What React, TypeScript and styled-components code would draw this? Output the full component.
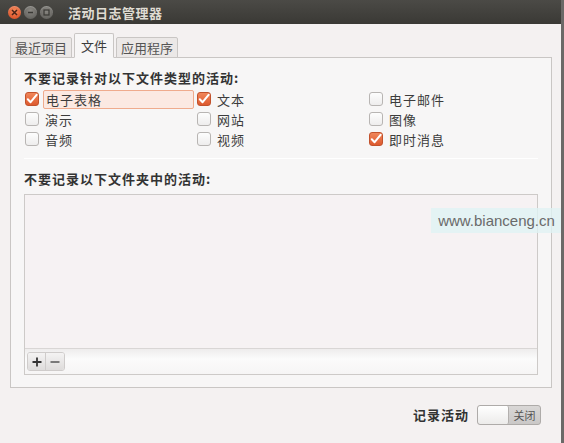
import React from 'react'
import styled, { createGlobalStyle } from 'styled-components'

const GlobalStyle = createGlobalStyle`
    html, body {
        margin: 0;
        padding: 0;
        background: #f4f1f1;
    }
    * {
        box-sizing: border-box;
    }
`

const Window = styled.div`
    position: relative;
    width: 564px;
    height: 443px;
    display: flex;
    flex-direction: column;
    background: #f4f1f1;
    border-right: 3px solid #6b6967;
    font-family: 'Noto Sans CJK SC', 'Noto Sans', sans-serif;
    font-size: 13px;
    color: #3c3c3c;
    overflow: hidden;
`

const TitleBar = styled.div`
    height: 24px;
    flex: none;
    display: flex;
    align-items: center;
    padding-left: 8px;
    background: linear-gradient(#4b4a46, #3a3935);
`

const WinButton = styled.span<{ color: string }>`
    width: 13px;
    height: 13px;
    border-radius: 50%;
    margin-right: 3px;
    display: flex;
    align-items: center;
    justify-content: center;
    background: ${props => props.color};
    box-shadow: inset 0 1px 1px rgba(255, 255, 255, 0.25);
`

const Title = styled.span`
    margin-left: 12px;
    color: #dfdbd2;
    font-weight: bold;
    font-size: 13px;
    letter-spacing: 0.5px;
`

const Body = styled.div`
    flex: 1;
    display: flex;
    flex-direction: column;
    padding: 9px 9px 0 10px;
`

const TabRow = styled.div`
    display: flex;
    align-items: flex-end;
    height: 25px;
    margin-bottom: -1px;
    position: relative;
    z-index: 1;
`

const Tab = styled.div<{ active?: boolean }>`
    height: ${props => (props.active ? '25px' : '21px')};
    padding: 0 ${props => (props.active ? '6px' : '4px')};
    margin-right: 2px;
    display: flex;
    align-items: center;
    border: 1px solid #c9c6c4;
    border-bottom-color: ${props => (props.active ? '#f7f6f6' : '#c9c6c4')};
    border-radius: 2px 2px 0 0;
    background: ${props => (props.active ? '#f7f6f6' : '#ebe8e7')};
    color: ${props => (props.active ? '#3c3c3c' : '#555')};
`

const Notebook = styled.div`
    height: 331px;
    border: 1px solid #c9c6c4;
    background: #f7f6f6;
    padding: 12px 13px 12px 13px;
    display: flex;
    flex-direction: column;
`

const Heading = styled.div`
    font-weight: bold;
    line-height: 16px;
    letter-spacing: 1px;
    color: #333;
`

const TypeGrid = styled.div`
    display: grid;
    grid-template-columns: 172px 172px 1fr;
    grid-auto-rows: 20px;
    margin-top: 3px;
`

const Option = styled.label`
    display: flex;
    align-items: center;
    gap: 4px;
    padding-left: 1px;
`

const Box = styled.span<{ checked?: boolean }>`
    width: 14px;
    height: 14px;
    flex: none;
    border-radius: 3px;
    display: flex;
    align-items: center;
    justify-content: center;
    border: 1px solid ${props => (props.checked ? '#c2522c' : '#b8b5b3')};
    background: ${props =>
        props.checked ? 'linear-gradient(#f0865a, #dd5a2f)' : 'linear-gradient(#fdfdfd, #eeeded)'};
`

const Label = styled.span<{ focused?: boolean }>`
    flex: ${props => (props.focused ? '0 0 151px' : 'none')};
    height: 19px;
    display: flex;
    align-items: center;
    padding-left: ${props => (props.focused ? '2px' : '1px')};
    border: 1px solid ${props => (props.focused ? '#efab8d' : 'transparent')};
    border-radius: 2px;
    background: ${props => (props.focused ? '#fbe9e2' : 'transparent')};
    letter-spacing: 1px;
`

const Separator = styled.div`
    height: 1px;
    background: #dcdad8;
    border-bottom: 1px solid #ffffff;
    margin: 9px 0 12px;
`

const ListFrame = styled.div`
    flex: 1;
    margin-top: 7px;
    display: flex;
    flex-direction: column;
    border: 1px solid #cdcac8;
`

const ListArea = styled.div`
    flex: 1;
    background: #f6f2f3;
    border-bottom: 1px solid #d9d6d5;
`

const Toolbar = styled.div`
    height: 25px;
    display: flex;
    align-items: center;
    padding-left: 2px;
    background: linear-gradient(#eeecec, #fbfbfb 40%, #f6f5f5);
`

const ToolGroup = styled.div`
    display: flex;
    border: 1px solid #cfcccb;
    border-radius: 3px;
    overflow: hidden;
`

const ToolButton = styled.button`
    width: 18px;
    height: 17px;
    padding: 0;
    border: none;
    border-right: 1px solid #cfcccb;
    background: linear-gradient(#f4f3f3, #dedcdb);
    display: flex;
    align-items: center;
    justify-content: center;
    &:last-child {
        border-right: none;
    }
`

const Footer = styled.div`
    flex: 1;
    display: flex;
    align-items: center;
    justify-content: flex-end;
    padding-right: 11px;
    padding-bottom: 2px;
    gap: 8px;
`

const FooterLabel = styled.span`
    font-weight: bold;
    letter-spacing: 1px;
    color: #333;
`

const Switch = styled.div`
    width: 64px;
    height: 20px;
    display: flex;
    border: 1px solid #aeaba9;
    border-radius: 3px;
    overflow: hidden;
    background: linear-gradient(#d9d7d6, #cac8c7);
`

const Knob = styled.div`
    width: 31px;
    background: linear-gradient(#ffffff, #ecebea);
    border-right: 1px solid #b3b0ae;
    border-radius: 2px;
`

const SwitchText = styled.span`
    flex: 1;
    display: flex;
    align-items: center;
    justify-content: center;
    font-size: 11px;
    color: #555;
`

const Watermark = styled.div`
    position: absolute;
    left: 431px;
    top: 208px;
    width: 131px;
    height: 25px;
    display: flex;
    align-items: center;
    justify-content: center;
    background: rgba(224, 242, 244, 0.8);
    font-family: 'Liberation Sans', Arial, sans-serif;
    font-size: 15px;
    color: #6a6a6a;
`

const Check = () => (
    <svg width="12" height="12" viewBox="0 0 12 12">
        <path d="M1.8 6.2 L4.6 9.2 L10.6 1.8" fill="none" stroke="#fff" strokeWidth="2" strokeLinecap="round" strokeLinejoin="round" />
    </svg>
)

const fileTypes = [
    { label: '电子表格', checked: true, focused: true },
    { label: '文本', checked: true },
    { label: '电子邮件' },
    { label: '演示' },
    { label: '网站' },
    { label: '图像' },
    { label: '音频' },
    { label: '视频' },
    { label: '即时消息', checked: true },
]

const App = () => {
    return (
        <Window>
            <GlobalStyle />
            <TitleBar>
                <WinButton color="radial-gradient(circle at 50% 35%, #f48a5c, #d6441b)">
                    <svg width="7" height="7" viewBox="0 0 7 7">
                        <path d="M1 1 L6 6 M6 1 L1 6" stroke="#4a2418" strokeWidth="1.5" />
                    </svg>
                </WinButton>
                <WinButton color="radial-gradient(circle at 50% 35%, #8a8883, #5a5955)">
                    <svg width="7" height="7" viewBox="0 0 7 7">
                        <path d="M1 3.5 L6 3.5" stroke="#3a3935" strokeWidth="1.5" />
                    </svg>
                </WinButton>
                <WinButton color="radial-gradient(circle at 50% 35%, #8a8883, #5a5955)">
                    <svg width="7" height="7" viewBox="0 0 7 7">
                        <rect x="1" y="1" width="5" height="5" fill="none" stroke="#3a3935" strokeWidth="1.2" />
                    </svg>
                </WinButton>
                <Title>活动日志管理器</Title>
            </TitleBar>
            <Body>
                <TabRow>
                    <Tab>最近项目</Tab>
                    <Tab active>文件</Tab>
                    <Tab>应用程序</Tab>
                </TabRow>
                <Notebook>
                    <Heading>不要记录针对以下文件类型的活动:</Heading>
                    <TypeGrid>
                        {fileTypes.map(t => (
                            <Option key={t.label}>
                                <Box checked={t.checked}>{t.checked && <Check />}</Box>
                                <Label focused={t.focused}>{t.label}</Label>
                            </Option>
                        ))}
                    </TypeGrid>
                    <Separator />
                    <Heading>不要记录以下文件夹中的活动:</Heading>
                    <ListFrame>
                        <ListArea />
                        <Toolbar>
                            <ToolGroup>
                                <ToolButton>
                                    <svg width="10" height="10" viewBox="0 0 10 10">
                                        <path d="M5 0.5 V9.5 M0.5 5 H9.5" stroke="#333" strokeWidth="1.8" />
                                    </svg>
                                </ToolButton>
                                <ToolButton>
                                    <svg width="10" height="10" viewBox="0 0 10 10">
                                        <path d="M0.5 5 H9.5" stroke="#555" strokeWidth="1.6" />
                                    </svg>
                                </ToolButton>
                            </ToolGroup>
                        </Toolbar>
                    </ListFrame>
                </Notebook>
                <Footer>
                    <FooterLabel>记录活动</FooterLabel>
                    <Switch>
                        <Knob />
                        <SwitchText>关闭</SwitchText>
                    </Switch>
                </Footer>
            </Body>
            <Watermark>www.bianceng.cn</Watermark>
        </Window>
    )
}

export default App
